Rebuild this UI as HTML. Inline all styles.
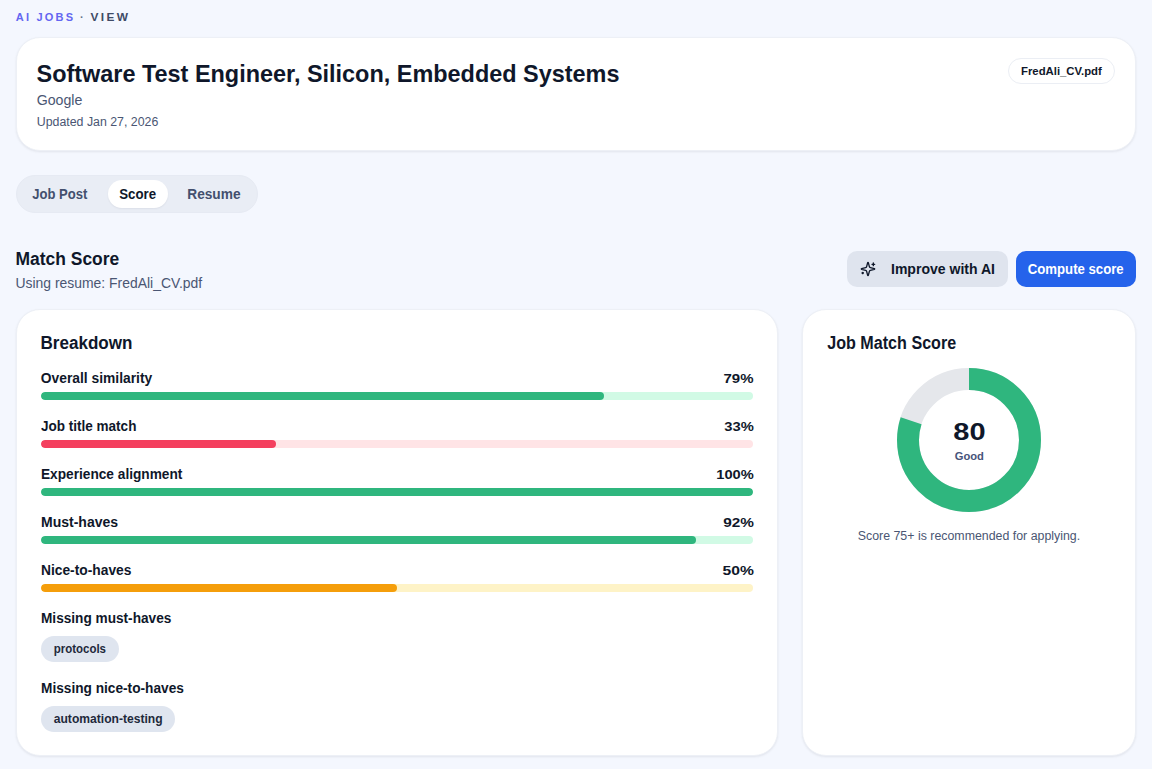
<!DOCTYPE html>
<html lang="en">
<head>
<meta charset="utf-8">
<title>AI Jobs · View</title>
<style>
*{box-sizing:border-box;margin:0;padding:0}
html,body{width:1152px;height:769px;overflow:hidden}
body{background:#f4f7fe;font-family:"Liberation Sans",sans-serif;color:#0f172a;position:relative}
.t{position:absolute;white-space:nowrap;line-height:1;transform-origin:0 0;z-index:2}
.card{position:absolute;background:#fff;border:1px solid #edf0f6;border-radius:24px;box-shadow:0 1px 3px rgba(15,23,42,.05),0 1px 2px rgba(15,23,42,.03)}
.filechip{position:absolute;left:1008px;top:58px;width:107px;height:26px;border:1px solid #ebeef4;border-radius:13px;background:#fff}
.tabs{position:absolute;left:16px;top:175px;width:242px;height:38px;border-radius:19px;background:#e9edf5;border:1px solid #e6eaf3}
.tabon{position:absolute;left:108px;top:180px;width:60px;height:28px;border-radius:14px;background:#fff;box-shadow:0 1px 2px rgba(15,23,42,.06)}
.btn{position:absolute;top:251px;height:36px;border-radius:10px}
.btn.ai{left:847px;width:161px;background:#dfe4ee}
.btn.go{left:1016px;width:120px;background:#2563eb}
.track{position:absolute;left:41px;width:712px;height:8px;border-radius:4px;overflow:hidden}
.fill{height:8px;border-radius:4px}
.g .fill{background:#2fb67e}.g{background:#d1fae5}
.r .fill{background:#f43f5e}.r{background:#ffe4e6}
.a .fill{background:#f59e0b}.a{background:#fef3c7}
.chip{position:absolute;left:41px;height:26px;border-radius:13px;background:#dfe5ef}
</style>
</head>
<body>
<div class="card" style="left:16px;top:37px;width:1120px;height:114px"></div>
<div class="filechip"></div>
<div class="tabs"></div><div class="tabon"></div>
<div class="btn ai"><svg style="position:absolute;left:13px;top:10px" width="16" height="16" viewBox="0 0 24 24" fill="none" stroke="#0f172a" stroke-width="2" stroke-linecap="round" stroke-linejoin="round"><path d="M9.937 15.5A2 2 0 0 0 8.5 14.063l-6.135-1.582a.5.5 0 0 1 0-.962L8.5 9.936A2 2 0 0 0 9.937 8.5l1.582-6.135a.5.5 0 0 1 .963 0L14.063 8.5A2 2 0 0 0 15.5 9.937l6.135 1.581a.5.5 0 0 1 0 .964L15.5 14.063a2 2 0 0 0-1.437 1.437l-1.582 6.135a.5.5 0 0 1-.963 0z"/><path d="M20 3v4"/><path d="M22 5h-4"/><path d="M4 17v2"/><path d="M5 18H3"/></svg></div>
<div class="btn go"></div>

<div class="card" style="left:16px;top:309px;width:762px;height:447px"></div>
<div class="track g" style="top:392px"><div class="fill" style="width:563px"></div></div>
<div class="track r" style="top:440px"><div class="fill" style="width:235px"></div></div>
<div class="track g" style="top:488px"><div class="fill" style="width:712px"></div></div>
<div class="track g" style="top:536px"><div class="fill" style="width:655px"></div></div>
<div class="track a" style="top:584px"><div class="fill" style="width:356px"></div></div>
<div class="chip" style="top:636px;width:78px"></div>
<div class="chip" style="top:706px;width:134px"></div>

<div class="card" style="left:802px;top:309px;width:334px;height:447px"></div>
<svg style="position:absolute;left:897px;top:368px" width="144" height="144" viewBox="0 0 144 144">
  <circle cx="72" cy="72" r="61" fill="none" stroke="#e5e7eb" stroke-width="22"/>
  <circle cx="72" cy="72" r="61" fill="none" stroke="#2fb67e" stroke-width="22" stroke-dasharray="306.62 383.27" transform="rotate(-90 72 72)"/>
</svg>

<div class="t" id="c1" style="left:15px;top:12px;font-size:11px;font-weight:700;color:#6366f1;transform:translateX(0.75px) scaleX(1.0018);letter-spacing:2.2px;">AI JOBS</div>
<div class="t" id="c2" style="left:80px;top:12px;font-size:11px;font-weight:700;color:#64748b;">·</div>
<div class="t" id="c3" style="left:90px;top:12px;font-size:11px;font-weight:700;color:#3f4b66;transform:translateX(0.5px) scaleX(1.0803);letter-spacing:2.2px;">VIEW</div>
<div class="t" id="ti" style="left:36px;top:62px;font-size:24px;font-weight:700;color:#0f172a;transform:translateX(0.5px) scaleX(0.9764);">Software Test Engineer, Silicon, Embedded Systems</div>
<div class="t" id="co" style="left:36px;top:93px;font-size:14px;font-weight:400;color:#4a5673;transform:translateX(0.75px) scaleX(1.0105);">Google</div>
<div class="t" id="up" style="left:36px;top:116px;font-size:12px;font-weight:400;color:#4a5673;transform:translateX(0.75px) scaleX(1.0296);">Updated Jan 27, 2026</div>
<div class="t" id="fc" style="left:1021px;top:66px;font-size:11.5px;font-weight:700;color:#0f172a;transform:scaleX(0.9853);">FredAli_CV.pdf</div>
<div class="t" id="t1" style="left:32px;top:187px;font-size:14px;font-weight:700;color:#43506e;transform:translateX(0.25px) scaleX(0.9309);">Job Post</div>
<div class="t" id="t2" style="left:119px;top:187px;font-size:14px;font-weight:700;color:#0f172a;transform:translateX(0.25px) scaleX(0.9468);">Score</div>
<div class="t" id="t3" style="left:187px;top:187px;font-size:14px;font-weight:700;color:#43506e;transform:translateX(0.25px) scaleX(0.9774);">Resume</div>
<div class="t" id="hm" style="left:15px;top:250px;font-size:18px;font-weight:700;color:#0f172a;transform:translateX(0.5px) scaleX(0.9692);">Match Score</div>
<div class="t" id="su" style="left:15px;top:276px;font-size:14px;font-weight:400;color:#4a5673;transform:translateX(0.5px) scaleX(0.9942);">Using resume: FredAli_CV.pdf</div>
<div class="t" id="b1" style="left:891px;top:262px;font-size:14.5px;font-weight:700;color:#0f172a;transform:scaleX(0.9676);">Improve with AI</div>
<div class="t" id="b2" style="left:1027px;top:262px;font-size:14.5px;font-weight:700;color:#ffffff;transform:translateX(0.75px) scaleX(0.9088);">Compute score</div>
<div class="t" id="hb" style="left:40px;top:334px;font-size:18px;font-weight:700;color:#0f172a;transform:translateX(0.5px) scaleX(0.9471);">Breakdown</div>
<div class="t" id="l1" style="left:40px;top:371px;font-size:14px;font-weight:700;color:#0f172a;transform:translateX(0.75px) scaleX(0.9875);">Overall similarity</div>
<div class="t" id="l2" style="left:41px;top:419px;font-size:14px;font-weight:700;color:#0f172a;transform:scaleX(0.9656);">Job title match</div>
<div class="t" id="l3" style="left:41px;top:467px;font-size:14px;font-weight:700;color:#0f172a;transform:scaleX(0.9768);">Experience alignment</div>
<div class="t" id="l4" style="left:41px;top:515px;font-size:14px;font-weight:700;color:#0f172a;">Must-haves</div>
<div class="t" id="l5" style="left:41px;top:563px;font-size:14px;font-weight:700;color:#0f172a;transform:scaleX(0.9846);">Nice-to-haves</div>
<div class="t" id="l6" style="left:41px;top:611px;font-size:14px;font-weight:700;color:#0f172a;transform:scaleX(0.9738);">Missing must-haves</div>
<div class="t" id="l7" style="left:41px;top:681px;font-size:14px;font-weight:700;color:#0f172a;transform:scaleX(0.9767);">Missing nice-to-haves</div>
<div class="t" id="p1" style="left:723px;top:372px;font-size:13px;font-weight:700;color:#0f172a;transform:translateX(0.5px) scaleX(1.1509);">79%</div>
<div class="t" id="p2" style="left:724px;top:420px;font-size:13px;font-weight:700;color:#0f172a;transform:translateX(0.25px) scaleX(1.1340);">33%</div>
<div class="t" id="p3" style="left:716px;top:468px;font-size:13px;font-weight:700;color:#0f172a;transform:translateX(0.25px) scaleX(1.1274);">100%</div>
<div class="t" id="p4" style="left:723px;top:516px;font-size:13px;font-weight:700;color:#0f172a;transform:translateX(0.25px) scaleX(1.1813);">92%</div>
<div class="t" id="p5" style="left:722px;top:564px;font-size:13px;font-weight:700;color:#0f172a;transform:translateX(0.5px) scaleX(1.2051);">50%</div>
<div class="t" id="k1" style="left:53px;top:643px;font-size:12px;font-weight:700;color:#1e293b;transform:translateX(0.75px) scaleX(0.9552);">protocols</div>
<div class="t" id="k2" style="left:53px;top:713px;font-size:12px;font-weight:700;color:#1e293b;transform:translateX(0.75px) scaleX(1.0075);">automation-testing</div>
<div class="t" id="hj" style="left:827px;top:334px;font-size:18px;font-weight:700;color:#0f172a;transform:translateX(0.25px) scaleX(0.8950);">Job Match Score</div>
<div class="t" id="n8" style="left:953px;top:420px;font-size:24px;font-weight:700;color:#0f172a;transform:translateX(0.25px) scaleX(1.2084);">80</div>
<div class="t" id="gd" style="left:954px;top:451px;font-size:11px;font-weight:700;color:#47547a;transform:translateX(0.75px) scaleX(1.0156);">Good</div>
<div class="t" id="cp" style="left:857px;top:530px;font-size:12px;font-weight:400;color:#4a5673;transform:translateX(0.75px) scaleX(1.0306);">Score 75+ is recommended for applying.</div>
</body>
</html>
